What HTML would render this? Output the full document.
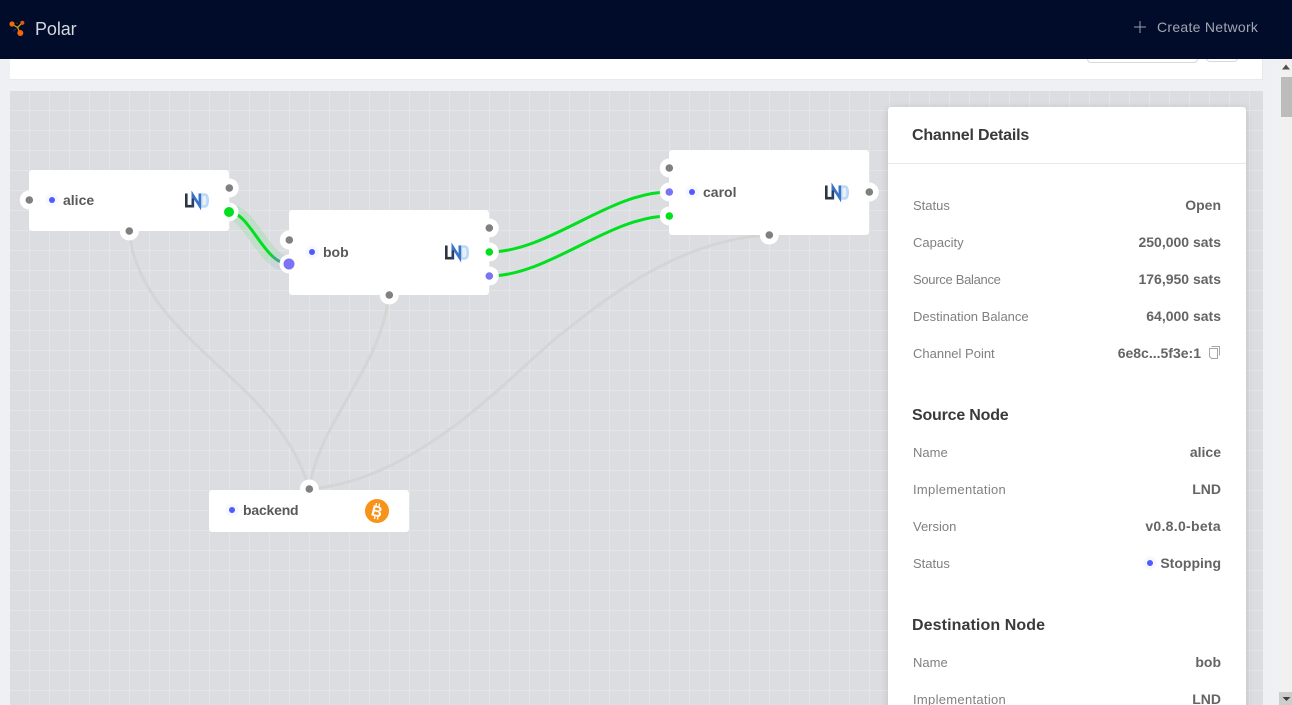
<!DOCTYPE html>
<html><head><meta charset="utf-8"><title>Polar</title>
<style>
html,body{margin:0;padding:0;width:1292px;height:705px;overflow:hidden;background:#eff0f4;font-family:"Liberation Sans",sans-serif}
#root{position:absolute;left:0;top:0;width:1292px;height:705px;overflow:hidden}
.abs{position:absolute}
#hdr{position:absolute;left:0;top:0;width:1292px;height:59px;background:#010c2a;z-index:5}
#card{position:absolute;left:10px;top:40px;width:1252px;height:39px;background:#fff;border-right:1px solid #e8e8e8;border-bottom:1px solid #e8e8e8}
.btn{position:absolute;background:#fff;border:1px solid #d9d9d9;border-radius:4px;box-sizing:border-box}
#canvas{position:absolute;left:10px;top:91px;width:1253px;height:614px;background-color:#dcdde1;
background-image:linear-gradient(to right,#e4e5e8 0,#e4e5e8 1px,transparent 1px),linear-gradient(to bottom,#e4e5e8 0,#e4e5e8 1px,transparent 1px);background-size:20px 20px;background-position:19px 19px}
.node{position:absolute;background:#fff;border-radius:3px;box-shadow:0 0 1px rgba(0,0,0,.05)}
.name{position:absolute;font-size:14px;font-weight:bold;color:#595959;line-height:20px;white-space:nowrap}
#panel{position:absolute;left:888px;top:107px;width:358px;height:640px;background:#fff;border-radius:3px;box-shadow:0 2px 8px rgba(0,0,0,.15)}
#panel .sep{position:absolute;left:0;top:56px;width:358px;height:1px;background:#e8e8e8}
.t{position:absolute;white-space:nowrap;line-height:20px;height:20px}
.l{left:913px;font-size:13px;color:#808080;margin-top:1px}
.v{right:71px;font-size:14px;font-weight:bold;color:#646464;text-align:right}
.h{left:912px;font-size:16px;font-weight:bold;color:#3a3a3a;line-height:22px;height:22px}
svg{position:absolute;overflow:visible}
</style></head>
<body><div id="root">
<div id="card"></div>
<div class="btn" style="left:1087px;top:40px;width:111px;height:23px"></div>
<div class="btn" style="left:1206px;top:40px;width:32px;height:22px"></div>
<div id="canvas"></div>

<svg style="left:0;top:0" width="1292" height="705" viewBox="0 0 1292 705">
<defs><linearGradient id="gp" gradientUnits="userSpaceOnUse" x1="229" y1="212" x2="289" y2="264"><stop offset="0" stop-color="#00e01e"/><stop offset=".72" stop-color="#00e01e"/><stop offset="1" stop-color="#7b72f5"/></linearGradient></defs>
<g fill="none" stroke="#d4d5d5" stroke-width="3">
<path d="M129,231C140,340 280,380 309,489"/>
<path d="M389,295C380,370 320,420 309,489"/>
<path d="M769,235C680,240 610,295 560,335S420,480 309,489"/>
</g>
<path d="M229,212C250,212 264,264 289,264" fill="none" stroke="url(#gp)" stroke-width="16" opacity=".12"/>
<path d="M229,212C250,212 264,264 289,264" fill="none" stroke="url(#gp)" stroke-width="3"/>
<path d="M489,252C549,252 609,192 669,192" fill="none" stroke="#00e01e" stroke-width="3"/>
<path d="M489,276C549,276 609,216 669,216" fill="none" stroke="#00e01e" stroke-width="3"/>
</svg>

<div class="node" style="left:29px;top:170px;width:200px;height:61px"></div>
<div class="node" style="left:289px;top:210px;width:200px;height:85px"></div>
<div class="node" style="left:669px;top:150px;width:200px;height:85px"></div>
<div class="node" style="left:209px;top:490px;width:200px;height:42px"></div>

<div class="name" style="left:63px;top:190px">alice</div>
<div class="name" style="left:323px;top:242px">bob</div>
<div class="name" style="left:703px;top:182px">carol</div>
<div class="name" style="left:243px;top:500px;letter-spacing:-.2px">backend</div>

<svg style="left:0;top:0" width="1292" height="705" viewBox="0 0 1292 705">
<defs>
<g id="lnd" fill="none" stroke-width="2.600">
<path d="M1.300,0V12.700H7" stroke="#2e3440"/>
<path d="M16,1H19.500Q22.700,1 22.700,7Q22.700,13 19.500,13H16Z" stroke="#bcd8f4" fill="#e4f0fb"/>
<path d="M7.800,14V1.500L14.800,12.500V0" stroke="#3a74c8"/>
<path d="M7.800,14V5" stroke="#2a3f66"/>
</g>
<g id="st"><circle r="6.500" fill="#f7f7ff"/><circle r="3" fill="#4f5bff"/></g>
</defs>
<use href="#lnd" x="185" y="193.500"/>
<use href="#lnd" x="445" y="245.500"/>
<use href="#lnd" x="825" y="185.500"/>
<use href="#st" x="52" y="200"/>
<use href="#st" x="312" y="252"/>
<use href="#st" x="692" y="192"/>
<use href="#st" x="232" y="510"/>

<!-- port halos -->
<g fill="#fff">
<circle cx="29.300" cy="200" r="9.500"/><circle cx="229.300" cy="188" r="9.500"/><circle cx="229" cy="212" r="9.500"/><circle cx="129.300" cy="231" r="9.500"/>
<circle cx="289.300" cy="240" r="9.500"/><circle cx="289" cy="264" r="9.500"/><circle cx="489.300" cy="228" r="9.500"/><circle cx="489.300" cy="252" r="9.500"/><circle cx="489.300" cy="276" r="9.500"/><circle cx="389.300" cy="295" r="9.500"/>
<circle cx="669.300" cy="168" r="9.500"/><circle cx="669.300" cy="192" r="9.500"/><circle cx="669.300" cy="216" r="9.500"/><circle cx="869.300" cy="192" r="9.500"/><circle cx="769.300" cy="235" r="9.500"/>
<circle cx="309.300" cy="489" r="9.500"/>
</g>
<g fill="#808080">
<circle cx="29.300" cy="200" r="3.800"/><circle cx="229.300" cy="188" r="3.800"/><circle cx="129.300" cy="231" r="3.800"/>
<circle cx="289.300" cy="240" r="3.800"/><circle cx="489.300" cy="228" r="3.800"/><circle cx="389.300" cy="295" r="3.800"/>
<circle cx="669.300" cy="168" r="3.800"/><circle cx="869.300" cy="192" r="3.800"/><circle cx="769.300" cy="235" r="3.800"/>
<circle cx="309.300" cy="489" r="3.800"/>
</g>
<circle cx="229" cy="212" r="5" fill="#00e01e"/>
<circle cx="289" cy="264" r="5.500" fill="#7b72f5"/>
<circle cx="489.300" cy="252" r="3.800" fill="#00e01e"/>
<circle cx="489.300" cy="276" r="3.800" fill="#7b72f5"/>
<circle cx="669.300" cy="192" r="3.800" fill="#7b72f5"/>
<circle cx="669.300" cy="216" r="3.800" fill="#00e01e"/>

<!-- bitcoin -->
<circle cx="377" cy="511" r="12" fill="#f7931a"/>
<g stroke="#fff" stroke-width="1.300"><path d="M376.500,503L376,506M379.500,503.500L379,506.500M375,515.500L374.500,519M378,516L377.500,519.500"/></g>
<text x="377" y="516.500" font-family="Liberation Sans" font-weight="bold" font-size="15" fill="#fff" text-anchor="middle" transform="rotate(14 377 511)">B</text>

<!-- scrollbar -->
<rect x="1279" y="59" width="13" height="646" fill="#f1f1f1"/>
<rect x="1281" y="77" width="11" height="40" fill="#bcbcbc"/>
<path d="M1286,64.500L1282,69.500H1290Z" fill="#505050"/>
<rect x="1279" y="692" width="13" height="13" fill="#cdcdcd"/>
<path d="M1282.500,697H1290.500L1286.500,701Z" fill="#404040"/>
</svg>

<div id="panel"><div class="sep"></div></div>
<div class="t h" style="top:125px;letter-spacing:-.2px">Channel Details</div>
<div class="t l" style="top:195px">Status</div><div class="t v" style="top:195px">Open</div>
<div class="t l" style="top:232px">Capacity</div><div class="t v" style="top:232px">250,000 sats</div>
<div class="t l" style="top:269px;letter-spacing:-.3px">Source Balance</div><div class="t v" style="top:269px">176,950 sats</div>
<div class="t l" style="top:306px">Destination Balance</div><div class="t v" style="top:306px">64,000 sats</div>
<div class="t l" style="top:343px">Channel Point</div><div class="t v" style="top:343px;right:91px">6e8c...5f3e:1</div>
<div class="t h" style="top:405px;letter-spacing:-.2px">Source Node</div>
<div class="t l" style="top:442px">Name</div><div class="t v" style="top:442px">alice</div>
<div class="t l" style="top:479px;letter-spacing:.3px">Implementation</div><div class="t v" style="top:479px">LND</div>
<div class="t l" style="top:516px">Version</div><div class="t v" style="top:516px;letter-spacing:.3px">v0.8.0-beta</div>
<div class="t l" style="top:553px">Status</div><div class="t v" style="top:553px">Stopping</div>
<div class="t h" style="top:615px;letter-spacing:.1px">Destination Node</div>
<div class="t l" style="top:652px">Name</div><div class="t v" style="top:652px">bob</div>
<div class="t l" style="top:689px;letter-spacing:.3px">Implementation</div><div class="t v" style="top:689px">LND</div>

<svg style="left:0;top:0;z-index:3" width="1292" height="705" viewBox="0 0 1292 705">
<use href="#st" x="1150" y="563"/>
<g fill="none" stroke="#a6a6a6" stroke-width="1">
<path d="M1211.500,346.500H1219.500V355.500"/>
<path d="M1209.500,348.500H1217.500V358.500H1211.500L1209.500,356.500Z"/>
</g>
</svg>

<div id="hdr">
<svg style="left:0;top:0" width="60" height="59" viewBox="0 0 60 59">
<g stroke="#d9a00e" stroke-width="1.300"><path d="M12,24L17.500,27.500L22,23M17.500,27.500L20,33"/></g>
<circle cx="12" cy="24" r="2.600" fill="#f2660f"/><circle cx="22.300" cy="22.800" r="2.100" fill="#e5590f"/><circle cx="20.300" cy="33" r="3" fill="#f2660f"/>
<circle cx="15" cy="29.500" r=".8" fill="#2b3aa0"/><circle cx="17" cy="23.500" r=".7" fill="#2b3aa0"/><circle cx="14" cy="31" r=".6" fill="#2b3aa0"/>
</svg>
<div class="abs" style="left:35px;top:17px;font-size:18px;line-height:24px;color:#d5d7de;letter-spacing:-.1px">Polar</div>
<svg style="left:1134px;top:21px" width="12" height="12" viewBox="0 0 12 12"><path d="M6,0V12M0,6H12" stroke="#9a9ea9" stroke-width="1" fill="none"/></svg>
<div class="abs" style="left:1157px;top:17px;font-size:14px;line-height:20px;color:#a3a6b0;letter-spacing:.28px;white-space:nowrap">Create Network</div>
</div>
</div></body></html>
